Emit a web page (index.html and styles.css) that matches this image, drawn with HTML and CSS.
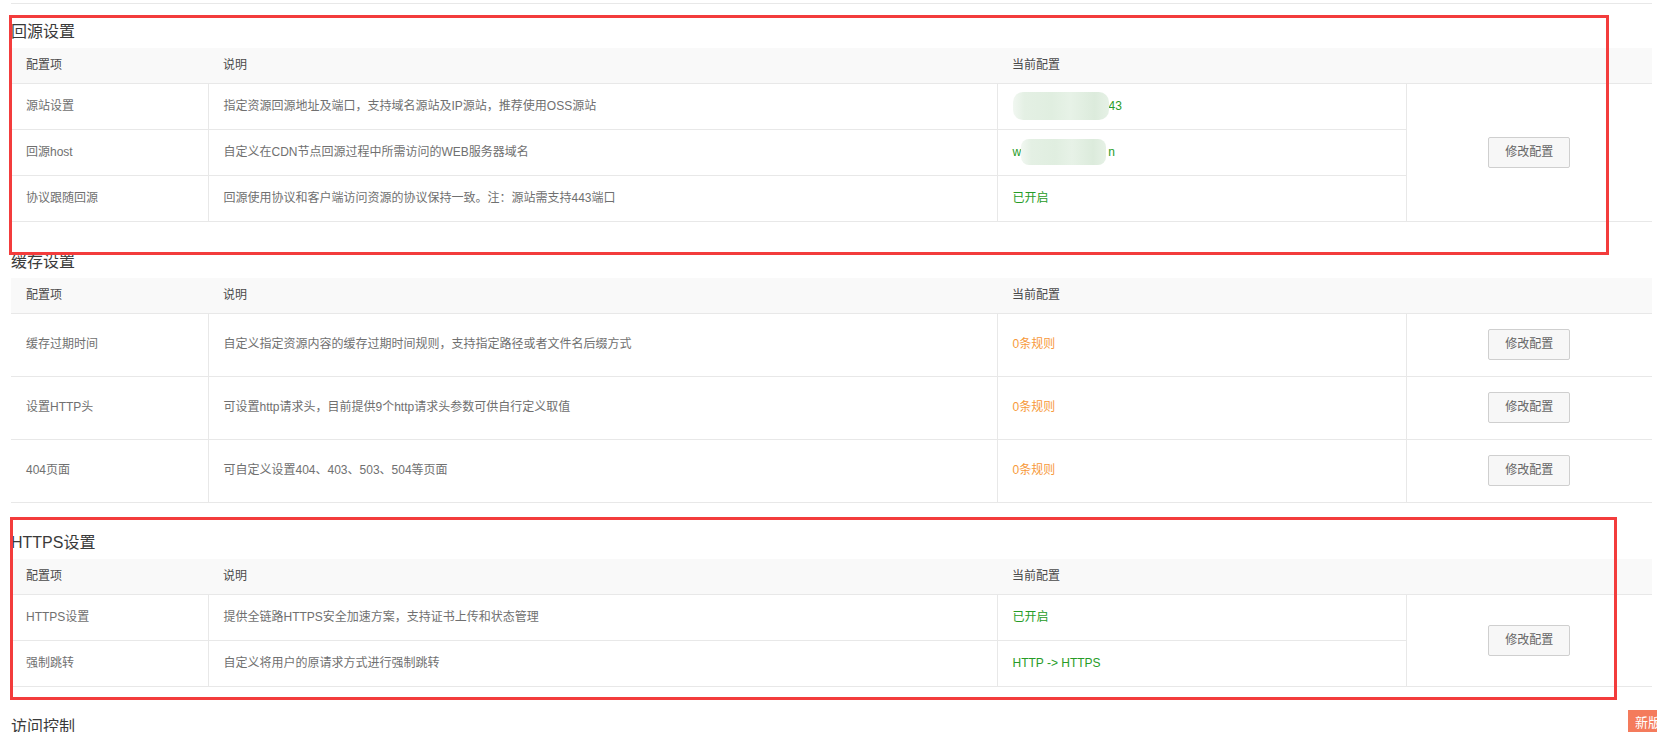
FILE: index.html
```html
<!DOCTYPE html>
<html lang="zh-CN">
<head>
<meta charset="utf-8">
<title>CDN 配置</title>
<link rel="stylesheet" href="styles.css">
</head>
<body>
<div class="page">
  <div class="topline"></div>

  <section class="section">
    <h4 class="title">回源设置</h4>
    <table class="cfg">
      <colgroup><col class="w1"><col class="w2"><col class="w3"><col class="w4"></colgroup>
      <thead>
        <tr><th>配置项</th><th>说明</th><th>当前配置</th><th></th></tr>
      </thead>
      <tbody>
        <tr>
          <td>源站设置</td>
          <td>指定资源回源地址及端口，支持域名源站及IP源站，推荐使用OSS源站</td>
          <td class="ok"><span class="blur b1"></span>43</td>
          <td class="act" rowspan="3"><button class="btn">修改配置</button></td>
        </tr>
        <tr>
          <td>回源host</td>
          <td>自定义在CDN节点回源过程中所需访问的WEB服务器域名</td>
          <td class="ok">w<span class="blur b2"></span>n</td>
        </tr>
        <tr>
          <td>协议跟随回源</td>
          <td>回源使用协议和客户端访问资源的协议保持一致。注：源站需支持443端口</td>
          <td class="ok">已开启</td>
        </tr>
      </tbody>
    </table>
  </section>

  <section class="section">
    <h4 class="title">缓存设置</h4>
    <table class="cfg tall">
      <colgroup><col class="w1"><col class="w2"><col class="w3"><col class="w4"></colgroup>
      <thead>
        <tr><th>配置项</th><th>说明</th><th>当前配置</th><th></th></tr>
      </thead>
      <tbody>
        <tr>
          <td>缓存过期时间</td>
          <td>自定义指定资源内容的缓存过期时间规则，支持指定路径或者文件名后缀方式</td>
          <td class="warn">0条规则</td>
          <td class="act"><button class="btn">修改配置</button></td>
        </tr>
        <tr>
          <td>设置HTTP头</td>
          <td>可设置http请求头，目前提供9个http请求头参数可供自行定义取值</td>
          <td class="warn">0条规则</td>
          <td class="act"><button class="btn">修改配置</button></td>
        </tr>
        <tr>
          <td>404页面</td>
          <td>可自定义设置404、403、503、504等页面</td>
          <td class="warn">0条规则</td>
          <td class="act"><button class="btn">修改配置</button></td>
        </tr>
      </tbody>
    </table>
  </section>

  <section class="section">
    <h4 class="title">HTTPS设置</h4>
    <table class="cfg">
      <colgroup><col class="w1"><col class="w2"><col class="w3"><col class="w4"></colgroup>
      <thead>
        <tr><th>配置项</th><th>说明</th><th>当前配置</th><th></th></tr>
      </thead>
      <tbody>
        <tr>
          <td>HTTPS设置</td>
          <td>提供全链路HTTPS安全加速方案，支持证书上传和状态管理</td>
          <td class="ok">已开启</td>
          <td class="act" rowspan="2"><button class="btn">修改配置</button></td>
        </tr>
        <tr>
          <td>强制跳转</td>
          <td>自定义将用户的原请求方式进行强制跳转</td>
          <td class="ok">HTTP -&gt; HTTPS</td>
        </tr>
      </tbody>
    </table>
  </section>

  <section class="section">
    <h4 class="title">访问控制</h4>
  </section>
</div>

<div class="mark mark-1"></div>
<div class="mark mark-2"></div>

<div class="feedback">新版<br>反馈</div>
</body>
</html>
```

FILE: styles.css
```css
html, body {
  margin: 0;
  padding: 0;
  background: #fff;
  overflow: hidden;
}

body {
  font-family: "Liberation Sans", "Noto Sans CJK SC", sans-serif;
  font-size: 12px;
  color: #707070;
  position: relative;
  width: 1657px;
  height: 732px;
}

.page {
  padding-left: 11px;
  width: 1641px;
}

.topline {
  height: 3px;
  border-bottom: 1px solid #e8e8e8;
}

.section {
  margin-top: 30px;
}

.section:first-of-type {
  margin-top: 18px;
}

.title {
  margin: 0 0 6px 0;
  font-size: 16px;
  line-height: 20px;
  font-weight: normal;
  color: #3a3a3a;
}

.cfg {
  width: 1641px;
  border-collapse: collapse;
  table-layout: fixed;
}

.w1 { width: 197px; }
.w2 { width: 789px; }
.w3 { width: 409px; }
.w4 { width: 246px; }

.cfg th {
  background: #f9f9f9;
  color: #4a4a4a;
  font-weight: normal;
  text-align: left;
  line-height: 17px;
  padding: 9px 15px;
  border-bottom: 1px solid #e8e8e8;
}

.cfg td {
  line-height: 17px;
  padding: 14px 15px;
  border-bottom: 1px solid #e8e8e8;
  vertical-align: middle;
  white-space: nowrap;
}

.cfg.tall td {
  padding-top: 15px;
  padding-bottom: 16px;
}

.cfg td + td {
  border-left: 1px solid #e8e8e8;
}

.cfg td.act {
  text-align: center;
  padding-top: 0;
  padding-bottom: 0;
}

.cfg.tall td.act {
  padding-top: 15px;
  padding-bottom: 16px;
}

.ok { color: #279c27; }
.warn { color: #f7993a; }

.btn {
  height: 31px;
  padding: 0 16px;
  background: #f7f7f7;
  border: 1px solid #cfcfcf;
  border-radius: 2px;
  color: #666;
  font-family: "Liberation Sans", "Noto Sans CJK SC", sans-serif;
  font-size: 12px;
  line-height: 29px;
  vertical-align: middle;
}

.blur {
  display: inline-block;
  position: relative;
  height: 17px;
  vertical-align: top;
}

.blur::before {
  content: "";
  position: absolute;
  left: 0;
  right: 0;
  border-radius: 10px;
  background: linear-gradient(90deg, #f1f7f1 0%, #e4f0e4 12%, #e0eee0 40%, #e7f2e7 60%, #dcebdc 85%, #e6f1e6 100%);
}

.b1 { width: 96px; }
.b1::before { top: -6px; bottom: -5px; }

.b2 { width: 85px; margin-left: 0; margin-right: 2px; }
.b2::before { top: -5px; bottom: -4px; border-radius: 8px; }

.mark {
  position: absolute;
  border: 3px solid #f33c3c;
  box-sizing: border-box;
  pointer-events: none;
}

.mark-1 {
  left: 9px;
  top: 15px;
  width: 1600px;
  height: 240px;
}

.mark-2 {
  left: 10px;
  top: 517px;
  width: 1607px;
  height: 183px;
}

.feedback {
  position: absolute;
  left: 1628px;
  top: 710px;
  width: 36px;
  padding: 5px 0 6px 7px;
  background: #f47b5c;
  color: #fff;
  font-size: 13px;
  line-height: 16px;
}
```
